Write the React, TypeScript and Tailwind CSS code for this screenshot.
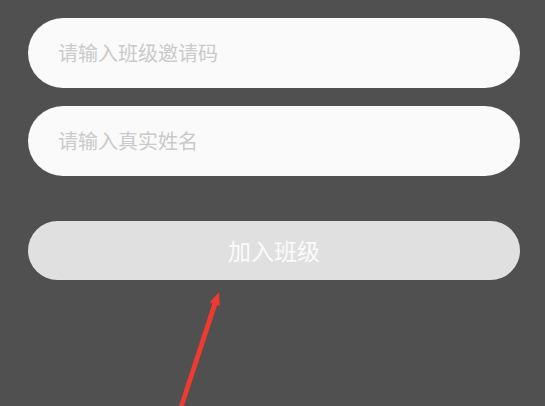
import { useState } from 'react'

const font = { fontFamily: '"Noto Sans CJK SC", "Noto Sans", sans-serif' }

function Field({ placeholder }: { placeholder: string }) {
  const [value, setValue] = useState('')
  return (
    <div className="flex h-[70px] items-center rounded-full bg-[#fafafa] pl-[30px] pr-6">
      <input
        value={value}
        onChange={e => setValue(e.target.value)}
        placeholder={placeholder}
        className="w-full bg-transparent text-[20px] text-[#333] outline-none placeholder:text-[#cacaca]"
      />
    </div>
  )
}

function Arrow() {
  return (
    <svg className="pointer-events-none absolute left-0 top-0" width="545" height="406" viewBox="0 0 545 406">
      <polygon
        points="219,292 219.8,306 217.2,305.1 181.9,412 177.5,410.5 212.4,303.5 209.8,302.6"
        fill="#ee3a2f"
      />
    </svg>
  )
}

export default function App() {
  return (
    <div className="relative h-[406px] w-[545px] overflow-hidden bg-[#505050]" style={font}>
      <div className="flex flex-col pl-[28px] pr-[25px] pt-[18px]">
        <div className="flex flex-col gap-[18px]">
          <Field placeholder="请输入班级邀请码" />
          <Field placeholder="请输入真实姓名" />
        </div>
        <button
          type="button"
          className="mt-[45px] flex h-[59px] items-center justify-center rounded-full bg-[#e0e0e0] text-[23px] text-[#fbfbfb]"
        >
          加入班级
        </button>
      </div>
      <Arrow />
    </div>
  )
}
